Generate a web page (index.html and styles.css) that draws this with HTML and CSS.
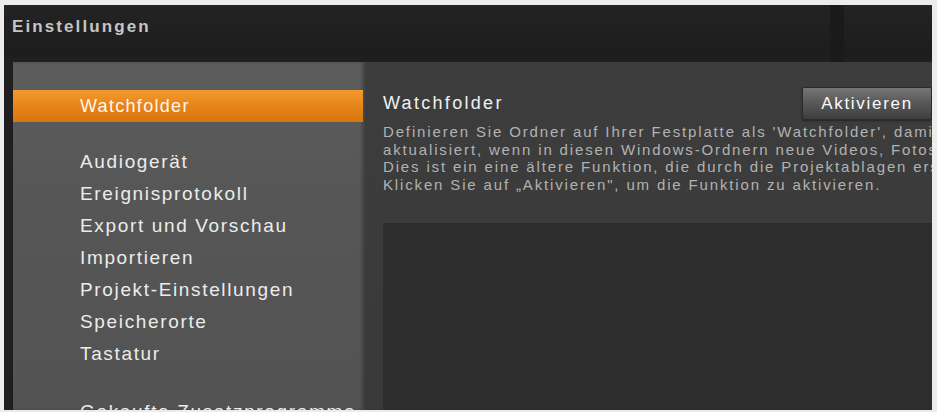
FILE: index.html
```html
<!DOCTYPE html>
<html lang="de">
<head>
<meta charset="utf-8">
<title>Einstellungen</title>
<link rel="stylesheet" href="styles.css">
</head>
<body>
<div class="window">
  <header class="titlebar">
    <span class="title">Einstellungen</span>
    <span class="title-mark"></span>
  </header>
  <div class="main">
    <nav class="sidebar">
      <div class="nav-item selected">Watchfolder</div>
      <div class="nav-group">
        <div class="nav-item">Audiogerät</div>
        <div class="nav-item">Ereignisprotokoll</div>
        <div class="nav-item">Export und Vorschau</div>
        <div class="nav-item">Importieren</div>
        <div class="nav-item">Projekt-Einstellungen</div>
        <div class="nav-item">Speicherorte</div>
        <div class="nav-item">Tastatur</div>
      </div>
      <div class="nav-group">
        <div class="nav-item">Gekaufte Zusatzprogramme</div>
      </div>
    </nav>
    <section class="panel">
      <div class="panel-head">
        <div class="head-row">
          <h1 class="heading">Watchfolder</h1>
          <button class="btn">Aktivieren</button>
        </div>
        <div class="desc">
          <p>Definieren Sie Ordner auf Ihrer Festplatte als 'Watchfolder', damit die Bibliothek automatisch</p>
          <p>aktualisiert, wenn in diesen Windows-Ordnern neue Videos, Fotos oder Musik gespeichert werden.</p>
          <p>Dies ist ein eine ältere Funktion, die durch die Projektablagen ersetzt wurde.</p>
          <p>Klicken Sie auf „Aktivieren", um die Funktion zu aktivieren.</p>
        </div>
      </div>
      <div class="panel-body"></div>
    </section>
  </div>
</div>
</body>
</html>
```
FILE: styles.css
```css
html, body {
  margin: 0;
  padding: 0;
}
body {
  background: #ececec;
  font-family: "Liberation Sans", Arial, sans-serif;
  width: 937px;
  height: 412px;
  overflow: hidden;
}
.window {
  margin: 5px 5px 0 4px;
  height: 405px;
  background: #1e1e1e;
  display: flex;
  flex-direction: column;
  overflow: hidden;
}
.titlebar {
  height: 57px;
  flex: none;
  display: flex;
  align-items: center;
  padding-left: 8px;
  background: linear-gradient(#232323, #1d1d1d 85%, #202020);
  position: relative;
}
.title {
  color: #c6c6c6;
  font-weight: bold;
  font-size: 17px;
  letter-spacing: 2.1px;
  margin-top: -14px;
}
.title-mark {
  position: absolute;
  left: 826px;
  top: 0;
  width: 14px;
  height: 57px;
  background: #1a1a1a;
}
.main {
  flex: 1;
  display: flex;
  padding-left: 9px;
  min-height: 0;
  background: #1f1f1f;
}
.sidebar {
  width: 352px;
  flex: none;
  background: linear-gradient(#5d5d5d, #565656 40%, #535353);
  padding-top: 28px;
  box-shadow: inset -3px 0 3px rgba(0,0,0,0.25);
}
.nav-item {
  height: 32px;
  line-height: 32px;
  padding-left: 67px;
  color: #ececec;
  font-size: 19px;
  letter-spacing: 1.65px;
  white-space: nowrap;
}
.nav-item.selected {
  background: linear-gradient(#f39a30, #e8861c 45%, #d8760f);
  color: #fff6ea;
  font-size: 18px;
  letter-spacing: 1.3px;
  margin-right: 2px;
}
.nav-group {
  margin-top: 24px;
}
.nav-group + .nav-group {
  margin-top: 26px;
}
.panel {
  flex: 1;
  display: flex;
  flex-direction: column;
  background: linear-gradient(#3d3d3d, #393939);
  min-width: 0;
  overflow: hidden;
}
.panel-head {
  padding: 25px 0 29px 18px;
}
.head-row {
  display: flex;
  justify-content: space-between;
  align-items: center;
  height: 33px;
}
.heading {
  margin: 0;
  font-size: 18px;
  letter-spacing: 2.3px;
  font-weight: normal;
  color: #f0f0f0;
}
.btn {
  width: 130px;
  height: 33px;
  border: 1px solid #2a2a2a;
  border-radius: 2px;
  background: linear-gradient(#767676, #5a5a5a 45%, #3e3e3e);
  color: #fafafa;
  font-family: inherit;
  font-size: 17px;
  letter-spacing: 1.7px;
  padding: 0;
  box-shadow: 0 1px 2px rgba(0,0,0,0.4);
}
.desc {
  color: #b2b2b2;
  font-size: 15px;
  letter-spacing: 1.85px;
  line-height: 17.7px;
  white-space: nowrap;
  margin-top: 3px;
}
.desc p {
  margin: 0;
}
.panel-body {
  flex: 1;
  margin-left: 18px;
  background: #2d2d2d;
}
```
